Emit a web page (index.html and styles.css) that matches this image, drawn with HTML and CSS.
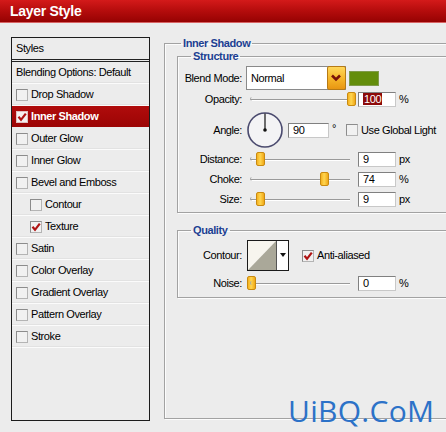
FILE: index.html
```html
<!DOCTYPE html>
<html>
<head>
<meta charset="utf-8">
<title>Layer Style</title>
<link rel="stylesheet" href="styles.css">
</head>
<body>
<div class="window">
  <div class="titlebar">Layer Style</div>
  <div class="content">
    <div class="styles-panel">
      <div class="styles-head">Styles</div>
      <div class="style-row">Blending Options: Default</div>
      <div class="style-row"><span class="cb"></span>Drop Shadow</div>
      <div class="style-row selected"><span class="cb"><svg width="10" height="10" viewBox="0 0 10 10"><path d="M1.5 4.8 L4 7.8 L8.8 1.6" fill="none" stroke="#b01414" stroke-width="2.2"/></svg></span>Inner Shadow</div>
      <div class="style-row"><span class="cb"></span>Outer Glow</div>
      <div class="style-row"><span class="cb"></span>Inner Glow</div>
      <div class="style-row"><span class="cb"></span>Bevel and Emboss</div>
      <div class="style-row sub"><span class="cb"></span>Contour</div>
      <div class="style-row sub"><span class="cb"><svg width="10" height="10" viewBox="0 0 10 10"><path d="M1.5 4.8 L4 7.8 L8.8 1.6" fill="none" stroke="#b01414" stroke-width="2.2"/></svg></span>Texture</div>
      <div class="style-row"><span class="cb"></span>Satin</div>
      <div class="style-row"><span class="cb"></span>Color Overlay</div>
      <div class="style-row"><span class="cb"></span>Gradient Overlay</div>
      <div class="style-row"><span class="cb"></span>Pattern Overlay</div>
      <div class="style-row"><span class="cb"></span>Stroke</div>
    </div>

    <div class="settings">
      <fieldset class="group outer">
        <legend>Inner Shadow</legend>

        <fieldset class="group structure">
          <legend>Structure</legend>

          <div class="frow blend-row">
            <span class="lbl">Blend Mode:</span>
            <div class="select">
              <span class="select-text">Normal</span>
              <span class="select-btn"><svg width="18" height="24" viewBox="0 0 18 24"><path d="M5 9.5 L9 13.5 L13 9.5" fill="none" stroke="#7a1208" stroke-width="2.6"/></svg></span>
            </div>
            <span class="swatch"></span>
          </div>

          <div class="frow opacity-row">
            <span class="lbl">Opacity:</span>
            <div class="slider"><span class="thumb" style="left:101px"></span></div>
            <span class="num"><span class="sel">100</span></span>
            <span class="unit">%</span>
          </div>

          <div class="frow angle-row">
            <span class="lbl">Angle:</span>
            <svg class="dial" width="36" height="36" viewBox="0 0 36 36">
              <circle cx="18" cy="18" r="17" fill="#f3f3f5" stroke="#4a4a6e" stroke-width="1.6"/>
              <line x1="18" y1="18" x2="18" y2="1.5" stroke="#111" stroke-width="1.2"/>
              <circle cx="18" cy="18" r="1.8" fill="#111"/>
            </svg>
            <span class="num angle-num">90</span>
            <span class="deg">°</span>
            <span class="cb global-cb"></span>
            <span class="cb-text">Use Global Light</span>
          </div>

          <div class="frow slider-row first">
            <span class="lbl">Distance:</span>
            <div class="slider"><span class="thumb" style="left:10px"></span></div>
            <span class="num">9</span>
            <span class="unit">px</span>
          </div>

          <div class="frow slider-row">
            <span class="lbl">Choke:</span>
            <div class="slider"><span class="thumb" style="left:74px"></span></div>
            <span class="num">74</span>
            <span class="unit">%</span>
          </div>

          <div class="frow slider-row">
            <span class="lbl">Size:</span>
            <div class="slider"><span class="thumb" style="left:10px"></span></div>
            <span class="num">9</span>
            <span class="unit">px</span>
          </div>
        </fieldset>

        <fieldset class="group quality">
          <legend>Quality</legend>

          <div class="frow contour-row">
            <span class="lbl">Contour:</span>
            <svg class="contour" width="42" height="31" viewBox="0 0 42 31">
              <rect x="0.5" y="0.5" width="41" height="30" fill="#fff" stroke="#1a1a1a"/>
              <polygon points="1,1 29,1 1,30" fill="#f7f5ee"/>
              <polygon points="29,1 29,30 1,30" fill="#aaa899"/>
              <line x1="29.5" y1="1" x2="29.5" y2="30" stroke="#555"/>
              <polygon points="33,13 39,13 36,17" fill="#111"/>
            </svg>
            <span class="cb aa-cb"><svg width="10" height="10" viewBox="0 0 10 10"><path d="M1.5 4.8 L4 7.8 L8.8 1.6" fill="none" stroke="#b01414" stroke-width="2.2"/></svg></span>
            <span class="cb-text">Anti-aliased</span>
          </div>

          <div class="frow noise-row">
            <span class="lbl">Noise:</span>
            <div class="slider noise"><span class="thumb" style="left:1px"></span></div>
            <span class="num">0</span>
            <span class="unit">%</span>
          </div>
        </fieldset>
      </fieldset>
    </div>
  </div>
  <div class="watermark">UiBQ.CoM</div>
</div>
</body>
</html>
```

FILE: styles.css
```css
* { box-sizing: border-box; }
html, body { margin: 0; padding: 0; }
body {
  width: 446px;
  height: 432px;
  overflow: hidden;
  background: #ececec;
  font-family: "Liberation Sans", Arial, sans-serif;
  font-size: 11px;
  line-height: 13px;
  letter-spacing: -0.4px;
  color: #000;
}
.window { position: relative; width: 446px; height: 432px; overflow: hidden; }

.titlebar {
  height: 23px;
  padding-left: 10px;
  line-height: 22px;
  font-size: 14px;
  font-weight: bold;
  letter-spacing: -0.3px;
  color: #fff;
  background: linear-gradient(#d41a1a, #b40c0c 50%, #960202);
  border-bottom: 1px solid #d86464;
}

.content { display: flex; align-items: flex-start; padding: 14px 0 0 11px; }

/* left styles list */
.styles-panel {
  flex: none;
  width: 139px;
  height: 384px;
  border: 1px solid #1c1c1c;
  background: #ececec;
}
.styles-head {
  height: 24px;
  padding-left: 4px;
  line-height: 21px;
  border-bottom: 3px double #222;
}
.style-row {
  display: flex;
  align-items: center;
  height: 22px;
  padding-left: 4px;
  border-bottom: 1px solid #fbfbfb;
  box-shadow: inset 0 -1px 0 #e2e2e2;
}
.style-row.sub { padding-left: 18px; }
.style-row.selected {
  background: linear-gradient(#b00c0c, #9c0404);
  color: #fff;
  font-weight: bold;
  box-shadow: none;
  border-bottom-color: #ececec;
}
.cb {
  flex: none;
  display: inline-flex;
  align-items: center;
  justify-content: center;
  width: 12px;
  height: 12px;
  margin-right: 3px;
  border: 1px solid #8c8c8c;
  border-right-color: #b4b4b4;
  border-bottom-color: #b4b4b4;
  background: #f1f1f1;
}
.style-row.selected .cb { background: #f6f0f0; border-color: #e0c0c0; }

/* right settings */
.settings { flex: none; width: 300px; margin-left: 14px; }
.group {
  margin: 0;
  padding: 0;
  min-width: 0;
  border: 1px solid #a2a2a2;
  box-shadow: inset 1px 1px 0 #fcfcfc, 1px 1px 0 #fcfcfc;
}
.group > legend {
  padding: 0 2px;
  margin-left: 13px;
  font-weight: bold;
  color: #1c3f92;
  line-height: 13px;
}
.group.outer { height: 382px; padding-left: 12px; }
.group.outer > legend { margin-left: 4px; }
.structure { padding-bottom: 5px; }
.quality { margin-top: 11px; padding-bottom: 6px; }

.frow { display: flex; align-items: center; height: 15px; }
.lbl { flex: none; width: 64px; text-align: right; }

.blend-row { height: 24px; margin-top: 3px; }
.select {
  position: relative;
  display: flex;
  align-items: center;
  width: 100px;
  height: 24px;
  margin-left: 4px;
  background: #fff;
  border: 1px solid #8a8a8a;
}
.select-text { padding-left: 4px; flex: 1; }
.select-btn {
  display: block;
  width: 19px;
  height: 24px;
  margin-right: -1px;
  background: linear-gradient(#ffd75a, #f5b428 55%, #e89612);
  border: 1px solid #b67a16;
  border-radius: 2px;
}
.select-btn svg { display: block; margin: -1px 0 0 -1px; }
.swatch {
  width: 30px;
  height: 15px;
  margin-left: 3px;
  background: #638d0b;
  border: 1px solid #7f9a4a;
}

.opacity-row { margin-top: 2px; }
.slider { position: relative; flex: none; width: 106px; height: 15px; margin-left: 4px; }
.slider::before {
  content: "";
  position: absolute;
  left: 4px;
  right: 2px;
  top: 7px;
  height: 1px;
  background: #9a9a9a;
  box-shadow: 0 1px 0 #fff;
}
.slider::after {
  content: "";
  position: absolute;
  left: 4px;
  top: 5px;
  width: 3px;
  height: 4px;
  border-left: 1px solid #a8a8a8;
  border-radius: 3px 0 0 3px;
}
.thumb {
  position: absolute;
  top: 0;
  width: 9px;
  height: 14px;
  background: linear-gradient(90deg, #f5b120, #ffd650 45%, #f0a818);
  border: 1px solid #c98a10;
  border-radius: 2px;
}
.num {
  flex: none;
  width: 38px;
  height: 15px;
  margin-left: 6px;
  padding-left: 4px;
  line-height: 13px;
  background: #fff;
  border: 1px solid #808080;
  border-right-color: #c8c8c8;
  border-bottom-color: #c8c8c8;
}
.num .sel { background: #8c0a0a; color: #fff; padding: 0 1px; }
.unit { margin-left: 3px; }

.angle-row { height: 36px; margin-top: 5px; }
.dial { flex: none; margin-left: 5px; }
.angle-num { width: 41px; margin-left: 5px; }
.deg { margin-left: 3px; margin-top: -4px; }
.global-cb { margin-left: 10px; }
.cb-text { white-space: nowrap; }

.slider-row { margin-top: 5px; }
.slider-row.first { margin-top: 4px; }

.contour-row { height: 31px; margin-top: 3px; }
.contour { flex: none; margin-left: 5px; }
.aa-cb { margin-left: 13px; }
.noise-row { margin-top: 5px; }

.watermark {
  position: absolute;
  left: 288px;
  top: 396px;
  font-family: "Open Sans", "Noto Sans", sans-serif;
  font-size: 30px;
  line-height: 1;
  letter-spacing: 0.3px;
  white-space: nowrap;
  color: #2c72c8;
}
```
